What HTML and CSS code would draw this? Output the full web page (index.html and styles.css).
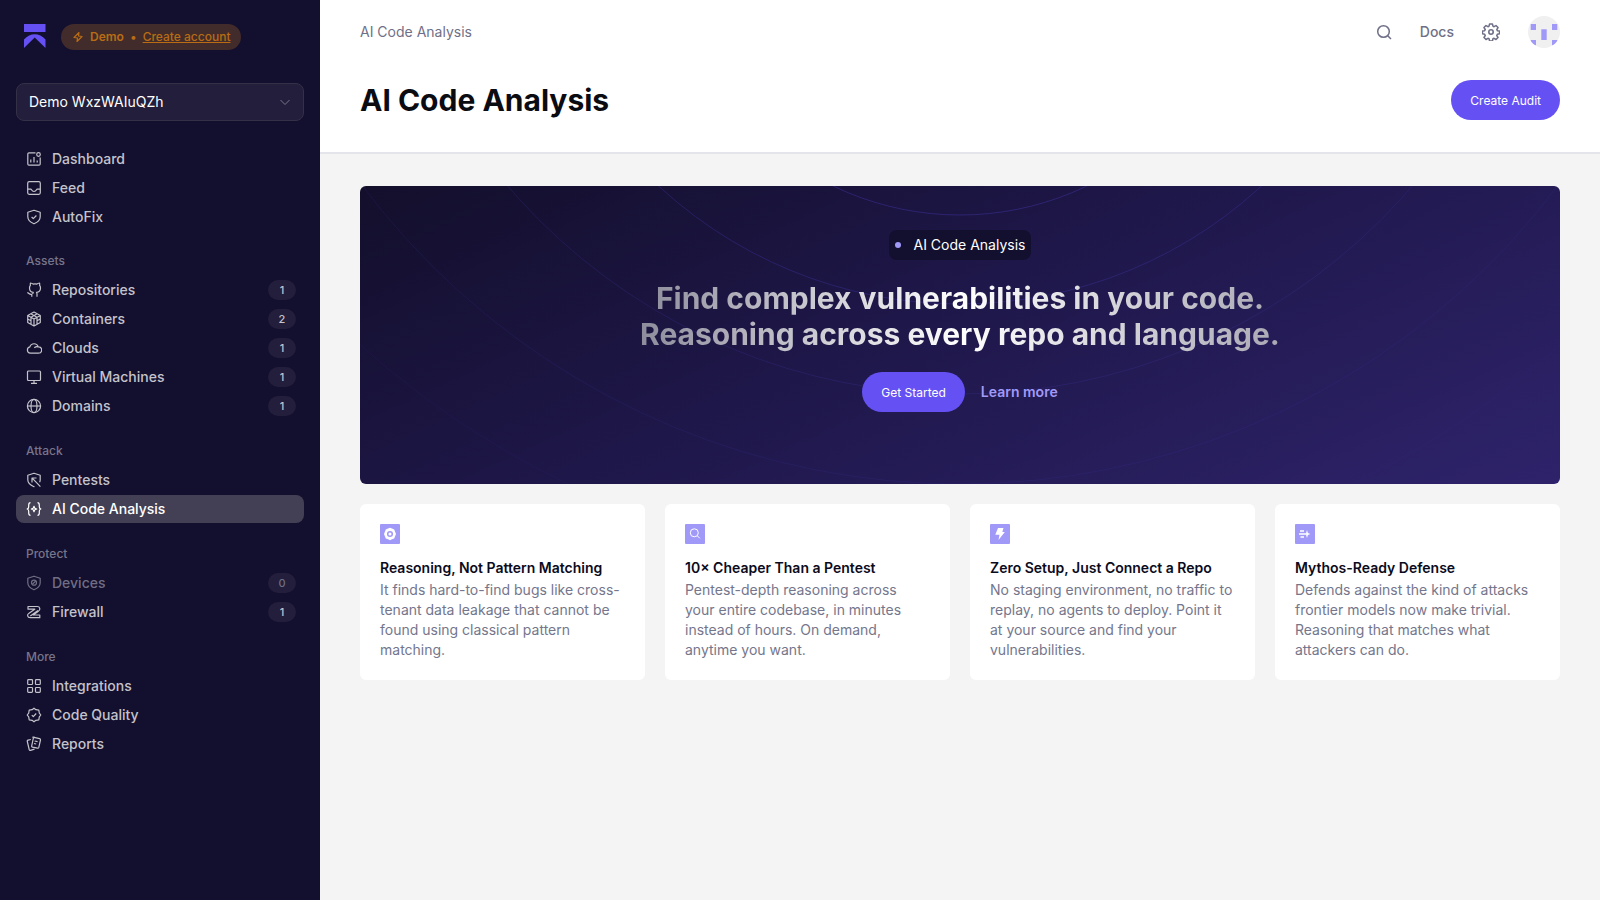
FILE: index.html
```html
<!DOCTYPE html>
<html lang="en">
<head>
    <meta charset="UTF-8">
    <meta name="viewport" content="width=device-width, initial-scale=1.0">
    <title>AI Code Analysis</title>
    <link rel="stylesheet" href="styles.css">
</head>
<body>

    <aside class="sidebar">
        <div class="brand">
            <svg class="logo" width="22" height="24" viewBox="0 0 22 24" fill="#6551f3">
                <path d="M0 0h21.500v8H0z"/>
                <path d="M0 15.500C3 12 7 10.300 10.700 10.300S18.500 12 21.500 15.500V24L10.700 13.500 0 24z"/>
            </svg>
            <div class="demo-pill">
                <svg width="12" height="12" viewBox="0 0 12 12" fill="none" stroke="currentColor" stroke-width="1.200" stroke-linejoin="round"><path d="M7 1.500 2 6.500 5.500 7 5 10.500l5-5L6.500 5z"/></svg>
                <strong>Demo</strong>
                <span>•</span>
                <a href="#">Create account</a>
            </div>
        </div>

        <div class="workspace">
            <select aria-label="Workspace">
                <option>Demo WxzWAIuQZh</option>
            </select>
            <svg class="chevron" width="12" height="12" viewBox="0 0 12 12" fill="none" stroke="currentColor"><path d="m1.500 4 4.500 4.500L10.500 4"/></svg>
        </div>

        <nav class="nav">
            <div class="nav-group">
                <a class="nav-item" href="#">
                    <svg class="icon" viewBox="0 0 16 16"><path d="M9.500 1.800H3A1.200 1.200 0 0 0 1.800 3v10A1.200 1.200 0 0 0 3 14.200h10a1.200 1.200 0 0 0 1.200-1.200V6.500M4.800 8.500v3M8 6v5.500M11.200 9.500v2"/><circle cx="12.500" cy="3.500" r="1.800"/></svg>
                    Dashboard
                </a>
                <a class="nav-item" href="#">
                    <svg class="icon" viewBox="0 0 16 16"><rect x="1.700" y="1.700" width="12.600" height="12.600" rx="1.500"/><path d="M1.700 9.200h3.200c.6 0 .8 2.300 3.100 2.300s2.500-2.300 3.100-2.300h3.200"/></svg>
                    Feed
                </a>
                <a class="nav-item" href="#">
                    <svg class="icon" viewBox="0 0 16 16"><path d="m8 1.200 6.200 2.100v4.500c0 3.500-2.700 5.600-6.200 7-3.500-1.400-6.200-3.500-6.200-7V3.300z"/><path d="m5.600 8 1.700 1.700 3.100-3.200"/></svg>
                    AutoFix
                </a>
            </div>

            <div class="nav-group">
                <h2>Assets</h2>
                <a class="nav-item" href="#">
                    <svg class="icon" viewBox="0 0 16 16"><path d="M5.800 14.800v-2.500c-2.600.8-2.800-1.500-4.500-1.600M11 14.800v-2.700c0-.8-.1-1.300-.5-1.700 2.500-.4 4-1.700 4-4.500 0-1-.3-1.900-.9-2.600.2-.8.2-1.500-.1-2.300-1 .1-1.800.5-2.600 1.100-1.200-.3-2.500-.3-3.800 0C6.300 1.500 5.500 1.100 4.500 1c-.3.800-.3 1.500-.1 2.300-.6.700-.9 1.600-.9 2.600 0 2.800 1.300 4.100 3.800 4.500-.4.4-.5 1-.5 1.700"/></svg>
                    Repositories <span class="count">1</span>
                </a>
                <a class="nav-item" href="#">
                    <svg class="icon" viewBox="0 0 16 16"><path d="m8 1 6.300 3.500v7L8 15l-6.300-3.500v-7zM1.700 4.500 8 8l6.300-3.500M8 8v7M4.800 2.800 11 6.300v3.200M11.200 2.800 5 6.300v3.200M1.700 8 5 9.700v3.500M14.300 8 11 9.700v3.500"/></svg>
                    Containers <span class="count">2</span>
                </a>
                <a class="nav-item" href="#">
                    <svg class="icon" viewBox="0 0 16 16"><path d="M4.300 13.200a3.200 3.200 0 0 1-.4-6.300 4.300 4.300 0 0 1 8.300 0h.3a3.150 3.150 0 0 1 0 6.300zM8.500 8c.3-1 2-1.700 3.700-1.100"/></svg>
                    Clouds <span class="count">1</span>
                </a>
                <a class="nav-item" href="#">
                    <svg class="icon" viewBox="0 0 16 16"><rect x="1.500" y="2" width="13" height="9.500" rx="1"/><path d="M8 11.500v3M5 14.300h6"/></svg>
                    Virtual Machines <span class="count">1</span>
                </a>
                <a class="nav-item" href="#">
                    <svg class="icon" viewBox="0 0 16 16"><circle cx="8" cy="8" r="6.600"/><ellipse cx="8" cy="8" rx="3" ry="6.600"/><path d="M1.400 8h13.200"/></svg>
                    Domains <span class="count">1</span>
                </a>
            </div>

            <div class="nav-group">
                <h2>Attack</h2>
                <a class="nav-item" href="#">
                    <svg class="icon" viewBox="0 0 16 16"><path d="M8.500 14.500 8 14.700C4.500 13.300 1.800 11.300 1.800 7.800V3.300L8 1.200l6.200 2.100v4.500c0 1-.2 1.800-.6 2.500M6 10.500V6h4.500M6.200 6.200l8.200 8.500"/></svg>
                    Pentests
                </a>
                <a class="nav-item active" href="#" aria-current="page">
                    <svg class="icon" viewBox="0 0 16 16"><path d="M4.500 1.700C2.800 1.700 2.700 2.500 2.700 4v1.800c0 1.300-.5 2-1.600 2.200 1.100.2 1.600.9 1.600 2.200V12c0 1.500.1 2.300 1.800 2.300M11.500 1.700c1.700 0 1.800.8 1.800 2.300v1.800c0 1.300.5 2 1.600 2.200-1.100.2-1.600.9-1.600 2.200V12c0 1.500-.1 2.300-1.800 2.300M8 5.300l.8 1.900 1.900.8-1.900.8L8 10.700l-.8-1.900L5.300 8l1.900-.8z"/></svg>
                    AI Code Analysis
                </a>
            </div>

            <div class="nav-group">
                <h2>Protect</h2>
                <a class="nav-item muted" href="#">
                    <svg class="icon" viewBox="0 0 16 16"><path d="m8 1.200 6.200 2.100v4.500c0 3.500-2.700 5.600-6.200 7-3.500-1.400-6.200-3.500-6.200-7V3.300z"/><circle cx="8" cy="7.700" r="2.500"/><path d="m6.300 9.400 3.400-3.400"/></svg>
                    Devices <span class="count">0</span>
                </a>
                <a class="nav-item" href="#">
                    <svg class="icon" viewBox="0 0 16 16"><path d="M2 2.500h9.200c3 0 3.500 3.500 1.200 4.700L7.200 11h6.600v2.700H4.200c-3 0-3.400-3.300-1.200-4.500l5.800-4H2zM4.300 12 12 6.500"/></svg>
                    Firewall <span class="count">1</span>
                </a>
            </div>

            <div class="nav-group">
                <h2>More</h2>
                <a class="nav-item" href="#">
                    <svg class="icon" viewBox="0 0 16 16"><rect x="1.700" y="1.700" width="4.800" height="4.800" rx=".8"/><rect x="9.500" y="1.700" width="4.800" height="4.800" rx=".8"/><rect x="1.700" y="9.500" width="4.800" height="4.800" rx=".8"/><rect x="9.500" y="9.500" width="4.800" height="4.800" rx=".8"/></svg>
                    Integrations
                </a>
                <a class="nav-item" href="#">
                    <svg class="icon" viewBox="0 0 16 16"><path d="m8 1.200 1.900 1.500 2.900.5.500 2.900L14.800 8l-1.500 1.900-.5 2.900-2.900.5L8 14.800l-1.900-1.500-2.900-.5-.5-2.900L1.200 8l1.500-1.900.5-2.900 2.900-.5z"/><path d="m5.800 8.200 1.500 1.500 2.900-3.200"/></svg>
                    Code Quality
                </a>
                <a class="nav-item" href="#">
                    <svg class="icon" viewBox="0 0 16 16"><path d="m6.800 1.200 6.800 1.500c.7.200 1 .6.900 1.300l-1.700 7.400c-.2.700-.6 1-1.300.8l-5-1.100c-.7-.2-1-.6-.8-1.300l1.600-7.500c.1-.8.4-1.100 1-1.100zM4.800 3.500l-2.700.7c-.7.200-1 .6-.8 1.300l1.900 8c.2.700.6 1 1.300.8l4-1.200M8.600 5l3 .7M8 7.500l2.200.5"/></svg>
                    Reports
                </a>
            </div>
        </nav>
    </aside>

    <main class="main">
        <header class="header">
            <div class="topbar">
                <span class="crumb">AI Code Analysis</span>
                <div class="tools">
                    <button class="icon-btn" aria-label="Search">
                        <svg width="16" height="16" viewBox="0 0 16 16" fill="none" stroke="currentColor" stroke-width="1.500"><circle cx="7.500" cy="7.500" r="5.800"/><path d="m11.700 11.700 3.300 3.300"/></svg>
                    </button>
                    <a class="docs" href="#">Docs</a>
                    <button class="icon-btn" aria-label="Settings">
                        <svg width="18" height="18" viewBox="1 1 18 18" fill="none" stroke="currentColor" stroke-width="1.600" stroke-linejoin="round"><path d="M8.500 1.900h3l.5 2.300 1.200.6 2-1.200 2.100 2.100-1.200 2 .5 1.200 2.300.4v2.900l-2.300.5-.6 1.300 1.300 2-2.100 2.100-2-1.200-1.200.5-.5 2.300h-3L8 17.400l-1.200-.5-2 1.200L2.700 16 4 14l-.6-1.300-2.300-.5V9.300l2.300-.4L4 7.700l-1.300-2 2.100-2.100 2 1.200L8 4.200z" transform="translate(.4 .1) scale(.96)"/><circle cx="10" cy="10" r="2.200"/></svg>
                    </button>
                    <svg class="avatar" width="32" height="32" viewBox="0 0 32 32" fill="#a199f8"><path fill="#f0f0f0" d="M0 0h32v32H0z"/><path d="M2.700 8H8v6H2.700zM24 8h5.300v6H24zM13.300 13.300h5.400V24h-5.400zM2.700 24H8v5.300H2.700zM24 24h5.300v5.300H24z"/></svg>
                </div>
            </div>
            <div class="title-row">
                <h1>AI Code Analysis</h1>
                <button class="btn">Create Audit</button>
            </div>
        </header>

        <div class="content">
            <section class="hero">
                <svg class="rings" width="1800" height="298" viewBox="-900 0 1800 298" fill="none" stroke="#3f32a0">
                    <circle cy="-263" r="292" opacity=".5"/>
                    <circle cy="-326" r="444" opacity=".4"/>
                    <circle cy="-388" r="596" opacity=".25"/>
                    <circle cy="-450" r="748" opacity=".18"/>
                    <circle cy="-512" r="900" opacity=".12"/>
                </svg>
                <span class="tag">AI Code Analysis</span>
                <h2>Find complex vulnerabilities in your code.<br>Reasoning across every repo and language.</h2>
                <div class="hero-actions">
                    <button class="btn">Get Started</button>
                    <a class="learn" href="#">Learn more</a>
                </div>
            </section>

            <section class="cards">
                <article class="card">
                    <svg class="card-icon" viewBox="0 0 20 20" fill="none"><rect width="20" height="20" rx="1" fill="#a199f8"/><path fill="#fff" d="m10 3.800 2 .8 2.200.9.900 2.200.9 2.300-.9 2.200-.9 2.200-2.200.9-2 .9-2-.9-2.200-.9-.9-2.200-.9-2.200.9-2.300.9-2.200L8 4.600z"/><circle cx="10" cy="10" r="2.300" stroke="#a199f8" stroke-width="1.500"/></svg>
                    <h3>Reasoning, Not Pattern Matching</h3>
                    <p>It finds hard-to-find bugs like cross-tenant data leakage that cannot be found using classical pattern matching.</p>
                </article>
                <article class="card">
                    <svg class="card-icon" viewBox="0 0 20 20" fill="none"><rect width="20" height="20" rx="1" fill="#a199f8"/><g stroke="#fff"><circle cx="9.300" cy="8.800" r="4"/><path d="m12.500 12 2.300 2.300"/></g></svg>
                    <h3>10× Cheaper Than a Pentest</h3>
                    <p>Pentest-depth reasoning across your entire codebase, in minutes instead of hours. On demand, anytime you want.</p>
                </article>
                <article class="card">
                    <svg class="card-icon" viewBox="0 0 20 20"><rect width="20" height="20" rx="1" fill="#a199f8"/><path fill="#fff" d="M8 4h5.500l-1.200 4h2.500L8.500 16l1-5.200H5.300z"/></svg>
                    <h3>Zero Setup, Just Connect a Repo</h3>
                    <p>No staging environment, no traffic to replay, no agents to deploy. Point it at your source and find your vulnerabilities.</p>
                </article>
                <article class="card">
                    <svg class="card-icon" viewBox="0 0 20 20" fill="none"><rect width="20" height="20" rx="1" fill="#a199f8"/><path stroke="#fff" stroke-width="1.500" d="M5 7h4M4 10h7M5.500 13h3.500"/><path fill="#fff" d="m12 6 .9 3.100L15.500 10l-2.600.9L12 14l-.9-3.100V9.100z"/></svg>
                    <h3>Mythos-Ready Defense</h3>
                    <p>Defends against the kind of attacks frontier models now make trivial. Reasoning that matches what attackers can do.</p>
                </article>
            </section>
        </div>
    </main>

</body>
</html>
```
FILE: styles.css
```css
* {
    box-sizing: border-box;
}
body {
    margin: 0;
    display: flex;
    min-height: 100vh;
    background-color: #f4f4f4;
    font-family: Inter, "Liberation Sans", sans-serif;
    font-size: 14px;
    line-height: 20px;
}
h1, h2, h3, p {
    margin: 0;
}
a {
    color: inherit;
    text-decoration: none;
}
button, select {
    font-family: inherit;
    cursor: pointer;
}

/* sidebar */
.sidebar {
    width: 320px;
    flex-shrink: 0;
    padding: 24px 16px;
    background: #130f2e;
    color: #c4c3cb;
}
.brand {
    display: flex;
    gap: 15px;
    padding-left: 8px;
    margin-bottom: 33px;
}
.demo-pill {
    display: flex;
    align-items: center;
    gap: 6px;
    height: 26px;
    padding: 0 11px;
    border-radius: 13px;
    background: #422c2b;
    color: #b96c14;
    font-size: 12px;
}
.demo-pill strong {
    font-weight: 600;
}
.demo-pill a {
    font-weight: 500;
    text-decoration: underline;
}
.workspace {
    position: relative;
    margin-bottom: 24px;
}
.workspace select {
    display: block;
    width: 100%;
    height: 38px;
    padding: 0 12px 2px;
    appearance: none;
    border: 1px solid #343047;
    border-radius: 8px;
    background: #221e3b;
    color: #fff;
    font-size: 14px;
}
.chevron {
    position: absolute;
    top: 13px;
    right: 13px;
    color: #77758a;
    pointer-events: none;
}
.nav-group {
    display: flex;
    flex-direction: column;
    gap: 1px;
    margin-bottom: 21px;
}
.nav-group:first-child {
    margin-bottom: 20px;
}
.nav-group h2 {
    padding: 0 10px;
    margin-bottom: 4px;
    color: #77758a;
    font-size: 12px;
    font-weight: 500;
    line-height: 20px;
}
.nav-item {
    display: flex;
    align-items: center;
    gap: 10px;
    height: 28px;
    padding: 0 8px 0 10px;
    border-radius: 8px;
    font-weight: 500;
}
.icon {
    width: 16px;
    height: 16px;
    fill: none;
    stroke: currentColor;
    stroke-width: 1.2;
    stroke-linejoin: round;
}
.active {
    background: #434055;
    color: #fff;
}
.muted {
    color: #706e83;
}
.count {
    width: 28px;
    margin-left: auto;
    border-radius: 10px;
    background: #221e3b;
    font-size: 11px;
    text-align: center;
}

/* page header */
.main {
    flex: 1;
    min-width: 0;
}
.header {
    padding: 16px 40px 32px;
    background: #fff;
    border-bottom: 2px solid #e4e4eb;
}
.topbar, .title-row, .tools {
    display: flex;
    align-items: center;
}
.topbar, .title-row {
    justify-content: space-between;
}
.topbar {
    margin-bottom: 32px;
    color: #6f7087;
}
.tools {
    gap: 28px;
}
.icon-btn {
    display: flex;
    padding: 0;
    border: 0;
    background: none;
    color: inherit;
}
.docs {
    font-weight: 500;
}
.avatar {
    border-radius: 50%;
}
h1 {
    color: #0b0b12;
    font-size: 30px;
    font-weight: 700;
    line-height: 40px;
}
.btn {
    height: 40px;
    padding: 0 19px;
    border: 0;
    border-radius: 20px;
    background: #6551f3;
    color: #fff;
    font-size: 12px;
}

/* content */
.content {
    padding: 32px 40px;
}
.hero {
    position: relative;
    display: flex;
    flex-direction: column;
    align-items: center;
    padding: 44px 20px 72px;
    margin-bottom: 20px;
    overflow: hidden;
    border-radius: 6px;
    background: linear-gradient(155deg, #130f2b, #1e1749 45%, #2e236b);
}
.rings {
    position: absolute;
    top: 0;
    left: 50%;
    transform: translateX(-50%);
}
.tag, .hero h2, .hero-actions {
    position: relative;
}
.tag {
    display: flex;
    align-items: center;
    gap: 13px;
    padding: 5px 6px;
    border-radius: 8px;
    background: #130f2e;
    color: #fff;
}
.tag::before {
    content: "";
    width: 6px;
    height: 6px;
    border-radius: 50%;
    background: #a199f8;
}
.hero h2 {
    margin: 20px 0;
    background: linear-gradient(90deg, #8d8c9c, #fff 50%, #a9a8b4);
    background-clip: text;
    -webkit-background-clip: text;
    color: transparent;
    font-size: 30px;
    font-weight: 700;
    line-height: 36px;
    text-align: center;
}
.hero-actions {
    display: flex;
    align-items: center;
    gap: 16px;
}
.learn {
    color: #a199f8;
    font-weight: 600;
}
.cards {
    display: grid;
    grid-template-columns: repeat(4, 1fr);
    gap: 20px;
}
.card {
    padding: 20px;
    border-radius: 6px;
    background: #fff;
    color: #74768c;
}
.card-icon {
    display: block;
    width: 20px;
    height: 20px;
    margin-bottom: 14px;
}
.card h3 {
    margin-bottom: 2px;
    color: #0b0b20;
    font-size: 14px;
    font-weight: 600;
    line-height: 20px;
}
```
